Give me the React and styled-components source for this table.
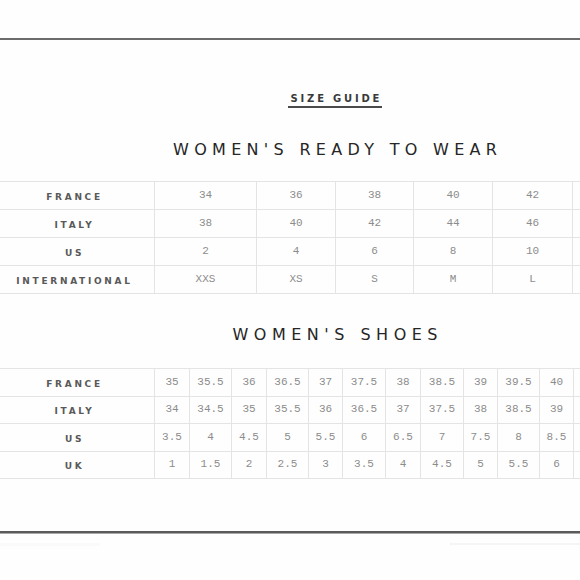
import React from "react";
import styled, { createGlobalStyle } from "styled-components";

const Global = createGlobalStyle`
  html, body { margin: 0; padding: 0; background: #fefefe; overflow: hidden; }
  body { width: 580px; height: 580px; }
`;

const Page = styled.div`
  width: 580px;
  height: 580px;
  padding-top: 38px;
  box-sizing: border-box;
  overflow: hidden;
  background: #fefefe;
`;

const TopRule = styled.div`
  height: 2px;
  background: #6c6c6c;
`;

const Centered = styled.div`
  padding-left: 90px;
  text-align: center;
  margin-top: ${(p) => p.$top}px;
`;

const SizeGuide = styled.span`
  display: inline-block;
  font-family: "DejaVu Sans", sans-serif;
  font-weight: 700;
  font-size: 10px;
  line-height: 12px;
  letter-spacing: 2.8px;
  padding-left: 2.8px;
  color: #3a3a3a;
  padding-bottom: 1px;
  border-bottom: 2px solid #4a4a4a;
`;

const Heading = styled.h2`
  margin: 0;
  font-family: "DejaVu Sans", sans-serif;
  font-weight: 400;
  font-size: 16px;
  line-height: 20px;
  letter-spacing: ${(p) => p.$ls}px;
  padding-left: ${(p) => p.$ls}px;
  color: #262626;
`;

const TableWrap = styled.div`
  margin-top: ${(p) => p.$top}px;
  width: 580px;
  overflow: hidden;
`;

const Table = styled.table`
  border-collapse: collapse;
  table-layout: fixed;
  margin-left: -1px;
`;

const Row = styled.tr`
  height: ${(p) => p.$h}px;
`;

const Label = styled.th`
  width: 155px;
  padding: 3px 5px 0 0;
  box-sizing: border-box;
  border: 1px solid #e4e4e4;
  font-family: "DejaVu Sans", sans-serif;
  font-weight: 700;
  font-size: 9px;
  letter-spacing: 2.7px;
  color: #595959;
  text-align: center;
  vertical-align: middle;
  white-space: nowrap;
`;

const Cell = styled.td`
  padding: 0 0 1px 0;
  border: 1px solid #e4e4e4;
  font-family: "Liberation Mono", "Courier New", monospace;
  font-size: 11px;
  color: #8c8c8c;
  text-align: center;
  vertical-align: middle;
  white-space: nowrap;
  overflow: hidden;
`;

const BottomRule = styled.div`
  margin-top: ${(p) => p.$top}px;
  height: 0;
  border-top: 2px solid #5a5a5a;
  border-bottom: 1px solid #a8a8a8;
`;

const Footer = styled.div`
  display: flex;
  justify-content: space-between;
  margin-top: 9px;
`;

const FaintBox = styled.div`
  width: 100px;
  height: 3px;
  background: #fafafa;
`;

const FaintLine = styled.div`
  width: 128px;
  height: 2px;
  background: #f5f5f5;
  border-left: 2px solid #f3f3f3;
`;

const rtw = {
  widths: [102, 79, 78, 79, 80, 60],
  rows: [
    ["FRANCE", ["34", "36", "38", "40", "42"]],
    ["ITALY", ["38", "40", "42", "44", "46"]],
    ["US", ["2", "4", "6", "8", "10"]],
    ["INTERNATIONAL", ["XXS", "XS", "S", "M", "L"]],
  ],
};

const shoes = {
  widths: [35, 42, 35, 42, 34, 43, 35, 43, 34, 42, 34, 40],
  rows: [
    ["FRANCE", ["35", "35.5", "36", "36.5", "37", "37.5", "38", "38.5", "39", "39.5", "40"]],
    ["ITALY", ["34", "34.5", "35", "35.5", "36", "36.5", "37", "37.5", "38", "38.5", "39"]],
    ["US", ["3.5", "4", "4.5", "5", "5.5", "6", "6.5", "7", "7.5", "8", "8.5"]],
    ["UK", ["1", "1.5", "2", "2.5", "3", "3.5", "4", "4.5", "5", "5.5", "6"]],
  ],
};

function SizeTable({ data, rowH }) {
  const total = 155 + data.widths.reduce((a, b) => a + b, 0);
  return (
    <Table style={{ width: total }}>
      <colgroup>
        <col style={{ width: 155 }} />
        {data.widths.map((w, i) => (
          <col key={i} style={{ width: w }} />
        ))}
      </colgroup>
      <tbody>
        {data.rows.map(([label, vals]) => (
          <Row key={label} $h={rowH}>
            <Label>{label}</Label>
            {vals.map((v, i) => (
              <Cell key={i}>{v}</Cell>
            ))}
            <Cell />
          </Row>
        ))}
      </tbody>
    </Table>
  );
}

export default function App() {
  return (
    <>
      <Global />
      <Page>
        <TopRule />
        <Centered $top={48}>
          <SizeGuide>SIZE GUIDE</SizeGuide>
        </Centered>
        <Centered $top={32}>
          <Heading $ls={5.3}>WOMEN'S READY TO WEAR</Heading>
        </Centered>
        <TableWrap $top={21}>
          <SizeTable data={rtw} rowH={28} />
        </TableWrap>
        <Centered $top={31}>
          <Heading $ls={5.5}>WOMEN'S SHOES</Heading>
        </Centered>
        <TableWrap $top={23}>
          <SizeTable data={shoes} rowH={27.5} />
        </TableWrap>
        <BottomRule $top={52} />
        <Footer>
          <FaintBox />
          <FaintLine />
        </Footer>
      </Page>
    </>
  );
}
